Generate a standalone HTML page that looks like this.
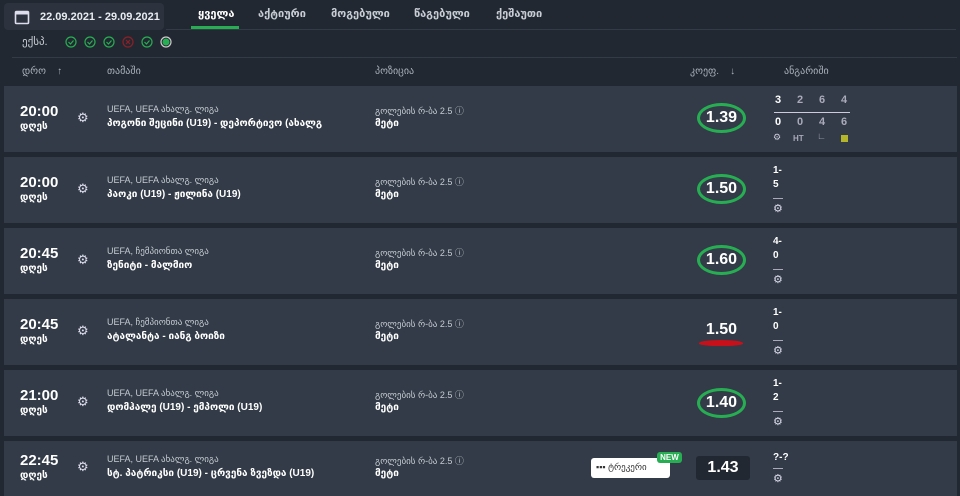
<!DOCTYPE html><html><head><meta charset="utf-8"><style>
*{margin:0;padding:0;box-sizing:border-box}
body{width:960px;height:496px;overflow:hidden;background:#222831;font-family:"Liberation Sans","DejaVu Sans",sans-serif;color:#fff;position:relative}
.a{position:absolute}
.date{left:4px;top:3px;width:160px;height:27px;background:#2c333e;border-radius:4px;font-size:11px;font-weight:bold;color:#e8ecf0;padding:8px 0 0 36px}
.tab{top:7px;font-size:11px;font-weight:bold;color:#c9ced6}
.hdr{font-size:10px;color:#aab2bd;top:66px}
.row{left:4px;width:953px;height:66px;background:#323b47}
.t{left:20px;font-size:15px;font-weight:bold}
.d{left:20px;font-size:10px;font-weight:bold}
.lg{left:107px;font-size:9px;color:#c7ccd3}
.m{left:107px;font-size:10px;font-weight:bold}
.p{left:375px;font-size:9px;color:#c7ccd3}
.p2{left:375px;font-size:10px;font-weight:bold}
.odd{left:697px;width:49px;height:30px;border:3px solid #27ae52;border-radius:50%;font-size:16px;font-weight:bold;text-align:center;line-height:24px}
.g{font-size:13px;color:#dde}
.sc{left:773px;font-size:10px;font-weight:bold;line-height:14px;text-align:left}
.ln{left:773px;width:10px;height:1px;background:#aab}
.n{position:absolute;font-size:11px;font-weight:bold;color:#aab}
</style></head><body>
<div class="a date"><svg class="a" style="left:10px;top:6px" width="16" height="16" viewBox="0 0 16 16"><rect x="1.5" y="2.5" width="13" height="12" rx="1" fill="none" stroke="#dde" stroke-width="1.6"/><rect x="1.5" y="2.5" width="13" height="3" fill="#dde"/></svg>22.09.2021 - 29.09.2021</div>
<div class="a tab" style="left:198px;color:#fff">ყველა</div>
<div class="a" style="left:191px;top:26px;width:48px;height:4px;background:#27ae52"></div>
<div class="a" style="left:166px;top:29px;width:790px;height:1px;background:#333b46"></div>
<div class="a tab" style="left:258px">აქტიური</div>
<div class="a tab" style="left:331px">მოგებული</div>
<div class="a tab" style="left:414px">წაგებული</div>
<div class="a tab" style="left:496px">ქეშაუთი</div>
<div class="a" style="left:22px;top:35px;font-size:11px;color:#c9ced6">ექსპ.</div>
<svg class="a" style="left:64px;top:35px" width="120" height="14">
<g fill="none" stroke-width="1.2"><circle cx="7" cy="7" r="5" stroke="#27ae52"/><circle cx="26" cy="7" r="5" stroke="#27ae52"/><circle cx="45" cy="7" r="5" stroke="#27ae52"/><circle cx="64" cy="7" r="5" stroke="#8b2027"/><circle cx="83" cy="7" r="5" stroke="#27ae52"/><circle cx="102" cy="7" r="5" stroke="#ccc"/>
<path d="M4.5 7l2 2 3-3.5M23.5 7l2 2 3-3.5M42.5 7l2 2 3-3.5M80.5 7l2 2 3-3.5" stroke="#27ae52"/><path d="M62 5l4 4M66 5l-4 4" stroke="#8b2027"/></g><circle cx="102" cy="7" r="3.5" fill="#27ae52"/></svg>
<div class="a" style="left:12px;top:57px;width:945px;height:1px;background:#333b46"></div>
<div class="a hdr" style="left:22px">დრო &nbsp;&nbsp; ↑</div>
<div class="a hdr" style="left:107px">თამაში</div>
<div class="a hdr" style="left:375px">პოზიცია</div>
<div class="a hdr" style="left:690px">კოეფ. &nbsp;&nbsp; ↓</div>
<div class="a hdr" style="left:784px">ანგარიში</div>

<div class="a row" style="top:86px"></div>
<div class="a row" style="top:157px"></div>
<div class="a row" style="top:228px"></div>
<div class="a row" style="top:299px"></div>
<div class="a row" style="top:370px"></div>
<div class="a row" style="top:441px;height:55px"></div>

<div class="a t" style="top:103px">20:00</div><div class="a d" style="top:121px">დღეს</div><div class="a g" style="left:77px;top:110px">⚙</div>
<div class="a lg" style="top:104px">UEFA, UEFA ახალგ. ლიგა</div><div class="a m" style="top:118px;width:245px;overflow:hidden;white-space:nowrap">პოგონი შეცინი (U19) - დეპორტივო (ახალგ</div>
<div class="a p" style="top:104px">გოლების რ-ბა 2.5 ⓘ</div><div class="a p2" style="top:118px">მეტი</div>
<div class="a odd" style="top:103px">1.39</div>
<span class="n" style="left:775px;top:94px;color:#fff">3</span><span class="n" style="left:797px;top:94px">2</span><span class="n" style="left:819px;top:94px">6</span><span class="n" style="left:841px;top:94px">4</span>
<div class="a" style="left:774px;top:112px;width:76px;height:1px;background:#ccd"></div>
<span class="n" style="left:775px;top:116px;color:#fff">0</span><span class="n" style="left:797px;top:116px">0</span><span class="n" style="left:819px;top:116px">4</span><span class="n" style="left:841px;top:116px">6</span>
<div class="a" style="left:773px;top:132px;font-size:9px;color:#ccd">⚙</div>
<div class="a" style="left:793px;top:134px;font-size:8px;font-weight:bold;color:#aab">HT</div>
<div class="a" style="left:817px;top:131px;font-size:9px;color:#aab">∟</div>
<div class="a" style="left:841px;top:135px;width:7px;height:7px;background:#b5b52a"></div>

<div class="a t" style="top:174px">20:00</div><div class="a d" style="top:192px">დღეს</div><div class="a g" style="left:77px;top:181px">⚙</div>
<div class="a lg" style="top:175px">UEFA, UEFA ახალგ. ლიგა</div><div class="a m" style="top:189px">პაოკი (U19) - ჟილინა (U19)</div>
<div class="a p" style="top:175px">გოლების რ-ბა 2.5 ⓘ</div><div class="a p2" style="top:189px">მეტი</div>
<div class="a odd" style="top:174px">1.50</div>
<div class="a sc" style="top:164px">1-<br>5</div><div class="a ln" style="top:198px"></div><div class="a g" style="left:773px;top:202px;font-size:11px">⚙</div>

<div class="a t" style="top:245px">20:45</div><div class="a d" style="top:263px">დღეს</div><div class="a g" style="left:77px;top:252px">⚙</div>
<div class="a lg" style="top:246px">UEFA, ჩემპიონთა ლიგა</div><div class="a m" style="top:260px">ზენიტი - მალმიო</div>
<div class="a p" style="top:246px">გოლების რ-ბა 2.5 ⓘ</div><div class="a p2" style="top:260px">მეტი</div>
<div class="a odd" style="top:245px">1.60</div>
<div class="a sc" style="top:235px">4-<br>0</div><div class="a ln" style="top:269px"></div><div class="a g" style="left:773px;top:273px;font-size:11px">⚙</div>

<div class="a t" style="top:316px">20:45</div><div class="a d" style="top:334px">დღეს</div><div class="a g" style="left:77px;top:323px">⚙</div>
<div class="a lg" style="top:317px">UEFA, ჩემპიონთა ლიგა</div><div class="a m" style="top:331px">ატალანტა - იანგ ბოიზი</div>
<div class="a p" style="top:317px">გოლების რ-ბა 2.5 ⓘ</div><div class="a p2" style="top:331px">მეტი</div>
<div class="a" style="left:697px;top:321px;width:49px;text-align:center;font-size:16px;font-weight:bold">1.50</div>
<div class="a" style="left:699px;top:340px;width:44px;height:6px;background:#c8101a;border-radius:50% 50% 40% 40%"></div>
<div class="a sc" style="top:306px">1-<br>0</div><div class="a ln" style="top:340px"></div><div class="a g" style="left:773px;top:344px;font-size:11px">⚙</div>

<div class="a t" style="top:387px">21:00</div><div class="a d" style="top:405px">დღეს</div><div class="a g" style="left:77px;top:394px">⚙</div>
<div class="a lg" style="top:388px">UEFA, UEFA ახალგ. ლიგა</div><div class="a m" style="top:402px">დომჰალე (U19) - ემპოლი (U19)</div>
<div class="a p" style="top:388px">გოლების რ-ბა 2.5 ⓘ</div><div class="a p2" style="top:402px">მეტი</div>
<div class="a odd" style="top:388px">1.40</div>
<div class="a sc" style="top:377px">1-<br>2</div><div class="a ln" style="top:411px"></div><div class="a g" style="left:773px;top:415px;font-size:11px">⚙</div>

<div class="a t" style="top:452px">22:45</div><div class="a d" style="top:470px">დღეს</div><div class="a g" style="left:77px;top:459px">⚙</div>
<div class="a lg" style="top:454px">UEFA, UEFA ახალგ. ლიგა</div><div class="a m" style="top:468px">სტ. პატრიკსი (U19) - ცრვენა ზვეზდა (U19)</div>
<div class="a p" style="top:454px">გოლების რ-ბა 2.5 ⓘ</div><div class="a p2" style="top:468px">მეტი</div>
<div class="a" style="left:591px;top:458px;width:79px;height:20px;background:#fff;border-radius:3px;color:#333;font-size:9px;padding:4px 0 0 5px">▪▪▪ ტრეკერი</div>
<div class="a" style="left:657px;top:452px;width:25px;height:11px;background:#27ae52;border-radius:3px;font-size:8px;font-weight:bold;text-align:center;line-height:11px">NEW</div>
<div class="a" style="left:696px;top:456px;width:54px;height:24px;background:#222831;border-radius:3px;font-size:16px;font-weight:bold;text-align:center;line-height:24px">1.43</div>
<div class="a sc" style="top:451px">?-?</div><div class="a ln" style="top:468px"></div><div class="a g" style="left:773px;top:472px;font-size:11px">⚙</div>
</body></html>
